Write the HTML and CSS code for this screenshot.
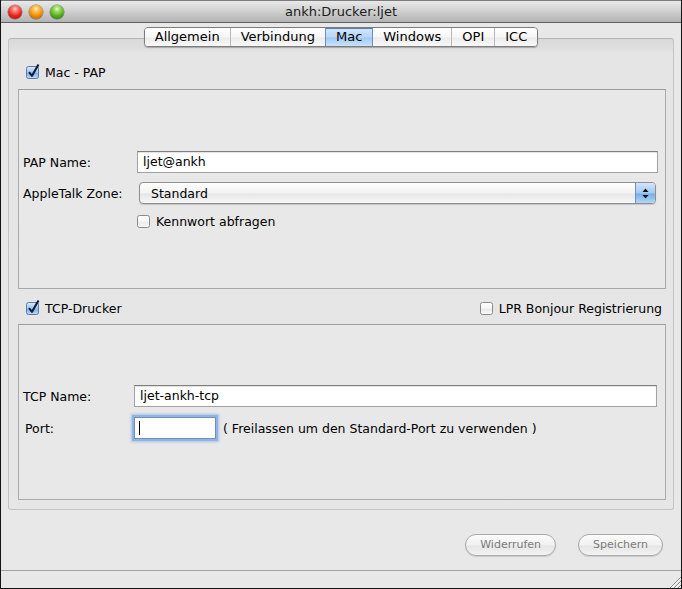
FILE: index.html
```html
<!DOCTYPE html>
<html>
<head>
<meta charset="utf-8">
<link rel="stylesheet" href="styles.css">
</head>
<body>
<div class="window">
  <div class="titlebar">
    <div class="lights">
      <span class="light red"></span>
      <span class="light yellow"></span>
      <span class="light green"></span>
    </div>
    <div class="title">ankh:Drucker:ljet</div>
    <div></div>
  </div>
  <div class="content">
    <div class="tabs">
      <div class="tabset">
        <span class="tab">Allgemein</span>
        <span class="tab">Verbindung</span>
        <span class="tab active">Mac</span>
        <span class="tab after-active">Windows</span>
        <span class="tab">OPI</span>
        <span class="tab">ICC</span>
      </div>
    </div>
    <div class="panel">
      <div class="check-row first">
        <label class="check">
          <svg class="cb" width="13" height="13" viewBox="0 0 13 13"><rect x=".5" y=".5" width="12" height="12" rx="2" fill="url(#cbBlue)" stroke="#5b7ba6"/><path d="M3 6.2 L6 9.8 L12.5 -1.5" fill="none" stroke="#151a35" stroke-width="2.1" stroke-linejoin="round"/></svg>
          <span>Mac - PAP</span>
        </label>
      </div>
      <div class="group g1">
        <div class="form f1">
          <span class="lbl">PAP Name:</span>
          <div class="field">ljet@ankh</div>
          <span class="lbl">AppleTalk Zone:</span>
          <div class="popup">
            <span class="popup-text">Standard</span>
            <span class="popup-arrows">
              <svg width="7" height="11" viewBox="0 0 7 11"><path d="M3.5 0.5 L6.5 4 L0.5 4 Z M0.5 7 L6.5 7 L3.5 10.5 Z" fill="#111"/></svg>
            </span>
          </div>
          <label class="check inform">
            <svg class="cb" width="13" height="13" viewBox="0 0 13 13"><rect x=".5" y=".5" width="12" height="12" rx="2" fill="url(#cbWhite)" stroke="#8a8a8a"/></svg>
            <span>Kennwort abfragen</span>
          </label>
        </div>
      </div>
      <div class="check-row second">
        <label class="check">
          <svg class="cb" width="13" height="13" viewBox="0 0 13 13"><rect x=".5" y=".5" width="12" height="12" rx="2" fill="url(#cbBlue)" stroke="#5b7ba6"/><path d="M3 6.2 L6 9.8 L12.5 -1.5" fill="none" stroke="#151a35" stroke-width="2.1" stroke-linejoin="round"/></svg>
          <span>TCP-Drucker</span>
        </label>
        <label class="check">
          <svg class="cb" width="13" height="13" viewBox="0 0 13 13"><rect x=".5" y=".5" width="12" height="12" rx="2" fill="url(#cbWhite)" stroke="#8a8a8a"/></svg>
          <span>LPR Bonjour Registrierung</span>
        </label>
      </div>
      <div class="group g2">
        <div class="form f2">
          <span class="lbl">TCP Name:</span>
          <div class="field">ljet-ankh-tcp</div>
          <span class="lbl port-lbl">Port:</span>
          <div class="port-row">
            <div class="field port focus"><span class="caret"></span></div>
            <span class="hint">( Freilassen um den Standard-Port zu verwenden )</span>
          </div>
        </div>
      </div>
    </div>
    <div class="buttons">
      <span class="btn">Widerrufen</span>
      <span class="btn">Speichern</span>
    </div>
    <div class="statusbar">
      <svg class="grip" width="12" height="12" viewBox="0 0 12 12">
        <path d="M12 1 L1 12 M12 5 L5 12 M12 9 L9 12" stroke="#8a8a8a" stroke-width="1"/>
        <path d="M12 2 L2 12 M12 6 L6 12 M12 10 L10 12" stroke="#fafafa" stroke-width="1"/>
      </svg>
    </div>
  </div>
</div>
<svg class="defs" width="0" height="0">
  <defs>
    <linearGradient id="cbBlue" x1="0" y1="0" x2="0" y2="1">
      <stop offset="0" stop-color="#d9ebfb"/>
      <stop offset="0.5" stop-color="#9cc6f0"/>
      <stop offset="0.55" stop-color="#7fb1e6"/>
      <stop offset="1" stop-color="#bcdcf8"/>
    </linearGradient>
    <linearGradient id="cbWhite" x1="0" y1="0" x2="0" y2="1">
      <stop offset="0" stop-color="#ffffff"/>
      <stop offset="0.5" stop-color="#f4f4f4"/>
      <stop offset="0.55" stop-color="#e9e9e9"/>
      <stop offset="1" stop-color="#fbfbfb"/>
    </linearGradient>
  </defs>
</svg>
</body>
</html>
```
FILE: styles.css
```css
html, body {
  margin: 0;
  padding: 0;
  background: #e8e8e8;
  overflow: hidden;
}
body {
  font-family: "DejaVu Sans", "Noto Sans", sans-serif;
  font-size: 12.5px;
  color: #000;
}
.window {
  width: 682px;
  height: 589px;
  box-sizing: border-box;
  border: 1px solid #141414;
  border-top: none;
  display: flex;
  flex-direction: column;
  background: #e8e8e8;
}
.titlebar {
  height: 23px;
  box-sizing: border-box;
  border-top: 1px solid #7b7b7b;
  border-bottom: 1px solid #606060;
  background: linear-gradient(#e9e9e9, #cfcfcf 50%, #b3b3b3 100%);
  display: grid;
  grid-template-columns: 1fr auto 1fr;
  align-items: center;
  flex: none;
}
.lights {
  display: flex;
  gap: 7px;
  padding-left: 7px;
}
.light {
  width: 14px;
  height: 14px;
  border-radius: 50%;
  box-sizing: border-box;
  box-shadow: 0 0 0 0.5px rgba(0,0,0,0.45);
}
.red {
  background: radial-gradient(circle at 50% 28%, #ffd6d2 0, #ff7f74 20%, #e5231c 58%, #9a100b 100%);
}
.yellow {
  background: radial-gradient(circle at 50% 28%, #fff2cc 0, #ffc552 20%, #ec8a0c 58%, #a35604 100%);
}
.green {
  background: radial-gradient(circle at 50% 28%, #e6ffd2 0, #a3e065 20%, #55ad1e 58%, #2b6b0a 100%);
}
.title {
  font-size: 13px;
  color: #1c1c1c;
  line-height: 20px;
}
.content {
  flex: 1;
  display: flex;
  flex-direction: column;
}
.tabs {
  display: flex;
  justify-content: center;
  margin-top: 4px;
  margin-bottom: -9px;
  position: relative;
  z-index: 1;
}
.tabset {
  display: flex;
  border: 1px solid #7c7c7c;
  border-radius: 4px;
  overflow: hidden;
  box-shadow: 0 1px 1px rgba(0,0,0,0.25);
}
.tab {
  height: 18px;
  line-height: 18px;
  padding: 0 10px;
  font-size: 13px;
  background: linear-gradient(#ffffff, #f6f6f6 50%, #ececec 55%, #f8f8f8);
  border-left: 1px solid #b8b8b8;
}
.tab:first-child {
  border-left: none;
}
.tab.active {
  background: linear-gradient(#d2e6fb, #b8d6f6 50%, #a2caf2 55%, #c9e2fa);
  border-left-color: #6b8fbf;
  box-shadow: inset 0 1px 0 #5c7fb0;
}
.tab.after-active {
  border-left-color: #6b8fbf;
}
.panel {
  margin: 0 7px;
  border: 1px solid #c4c4c4;
  border-top-color: #b4b4b4;
  border-radius: 3px;
  background: linear-gradient(#d9d9d9, #dfdfdf 10px, #e5e5e5 14px, #e6e6e6);
  padding: 26px 7px 9px 9px;
}
.check-row {
  height: 14px;
  display: flex;
  align-items: center;
}
.check-row.first {
  margin: 0 0 10px 8px;
}
.check-row.second {
  margin: 12px 4px 9px 8px;
  justify-content: space-between;
}
.check {
  display: flex;
  align-items: center;
  gap: 6px;
  white-space: nowrap;
}
.cb {
  overflow: visible;
  flex: none;
}
.group {
  box-sizing: border-box;
  border: 1px solid #aaaaaa;
  border-top-color: #9d9d9d;
  background: #e8e8e8;
}
.g1 {
  height: 200px;
  padding: 61px 7px 0 4px;
}
.g2 {
  height: 176px;
  padding: 60px 8px 0 4px;
}
.form {
  display: grid;
  align-items: center;
}
.f1 {
  grid-template-columns: 114px 1fr;
  row-gap: 9px;
}
.f2 {
  grid-template-columns: 111px 1fr;
  row-gap: 10px;
}
.lbl {
  white-space: nowrap;
}
.port-lbl {
  padding-left: 2px;
}
.field {
  height: 22px;
  box-sizing: border-box;
  border: 1px solid #a2a2a2;
  border-top-color: #7d7d7d;
  background: #fff;
  box-shadow: inset 0 1px 1px rgba(0,0,0,0.12);
  padding-left: 5px;
  line-height: 20px;
  white-space: nowrap;
}
.popup {
  margin: 0 2px;
  height: 22px;
  box-sizing: border-box;
  border: 1px solid #8e8e8e;
  border-radius: 4px;
  background: linear-gradient(#fefefe, #f3f3f3 50%, #e6e6e6 55%, #f7f7f7);
  display: flex;
  align-items: center;
  overflow: hidden;
  box-shadow: 0 1px 1px rgba(0,0,0,0.15);
}
.popup-text {
  flex: 1;
  padding-left: 11px;
}
.popup-arrows {
  width: 19px;
  align-self: stretch;
  border-left: 1px solid #6f92c0;
  background: linear-gradient(#d3e6fb, #a3c9f2 50%, #78aee8 55%, #b3d7f9);
  display: flex;
  align-items: center;
  justify-content: center;
}
.check.inform {
  grid-column: 2;
  height: 14px;
  margin-top: 1px;
}
.port-row {
  display: flex;
  align-items: center;
  gap: 7px;
}
.field.port {
  width: 82px;
  padding-left: 4px;
  display: flex;
  align-items: center;
}
.field.focus {
  border-color: #6f8fb9;
  box-shadow: 0 0 0 2px #8fb5e6, 0 0 2px 3px rgba(110,160,225,0.5);
}
.caret {
  width: 1px;
  height: 14px;
  background: #000;
}
.hint {
  white-space: nowrap;
}
.buttons {
  display: flex;
  justify-content: flex-end;
  gap: 22px;
  margin-top: 24px;
  padding-right: 18px;
}
.btn {
  height: 22px;
  box-sizing: border-box;
  line-height: 20px;
  padding: 0 14px;
  border: 1px solid #a9a9a9;
  border-radius: 11px;
  background: linear-gradient(#fbfbfb, #f1f1f1 50%, #e6e6e6 55%, #f3f3f3);
  color: #7a7a7a;
  font-size: 11px;
  box-shadow: 0 1px 1px rgba(0,0,0,0.12);
}
.statusbar {
  margin-top: auto;
  height: 18px;
  box-sizing: border-box;
  border-top: 1px solid #a3a3a3;
  display: flex;
  justify-content: flex-end;
  align-items: flex-end;
  background: #e8e8e8;
}
.grip {
  display: block;
}
.defs {
  display: block;
  overflow: hidden;
}
```
